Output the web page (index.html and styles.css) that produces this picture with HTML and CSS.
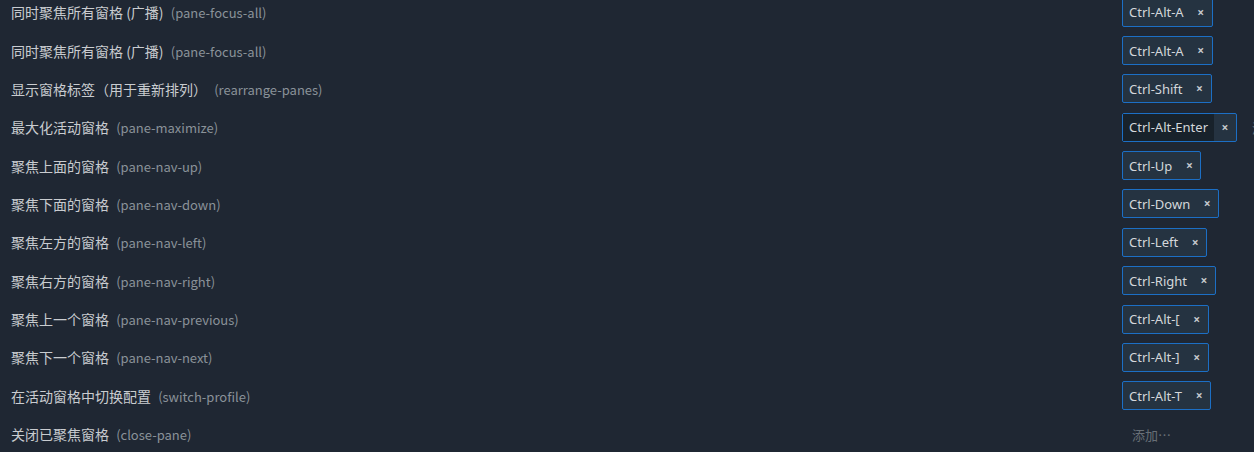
FILE: index.html
```html
<!DOCTYPE html>
<html>
<head>
    <title>快捷键</title>
    <link rel="stylesheet" href="styles.css">
</head>
<body>

<div class="hotkeys">
    <div class="row">
        <div class="name">同时聚焦所有窗格 (广播) <span class="id">(pane-focus-all)</span></div>
        <div class="keys"><span class="tag"><span class="combo">Ctrl-Alt-A</span><span class="remove">×</span></span></div>
    </div>
    <div class="row">
        <div class="name">同时聚焦所有窗格 (广播) <span class="id">(pane-focus-all)</span></div>
        <div class="keys"><span class="tag"><span class="combo">Ctrl-Alt-A</span><span class="remove">×</span></span></div>
    </div>
    <div class="row">
        <div class="name">显示窗格标签（用于重新排列） <span class="id">(rearrange-panes)</span></div>
        <div class="keys"><span class="tag"><span class="combo">Ctrl-Shift</span><span class="remove">×</span></span></div>
    </div>
    <div class="row">
        <div class="name">最大化活动窗格 <span class="id">(pane-maximize)</span></div>
        <div class="keys"><span class="tag hover"><span class="combo">Ctrl-Alt-Enter</span><span class="remove">×</span></span><span class="add">添加…</span></div>
    </div>
    <div class="row">
        <div class="name">聚焦上面的窗格 <span class="id">(pane-nav-up)</span></div>
        <div class="keys"><span class="tag"><span class="combo">Ctrl-Up</span><span class="remove">×</span></span></div>
    </div>
    <div class="row">
        <div class="name">聚焦下面的窗格 <span class="id">(pane-nav-down)</span></div>
        <div class="keys"><span class="tag"><span class="combo">Ctrl-Down</span><span class="remove">×</span></span></div>
    </div>
    <div class="row">
        <div class="name">聚焦左方的窗格 <span class="id">(pane-nav-left)</span></div>
        <div class="keys"><span class="tag"><span class="combo">Ctrl-Left</span><span class="remove">×</span></span></div>
    </div>
    <div class="row">
        <div class="name">聚焦右方的窗格 <span class="id">(pane-nav-right)</span></div>
        <div class="keys"><span class="tag"><span class="combo">Ctrl-Right</span><span class="remove">×</span></span></div>
    </div>
    <div class="row">
        <div class="name">聚焦上一个窗格 <span class="id">(pane-nav-previous)</span></div>
        <div class="keys"><span class="tag"><span class="combo">Ctrl-Alt-[</span><span class="remove">×</span></span></div>
    </div>
    <div class="row">
        <div class="name">聚焦下一个窗格 <span class="id">(pane-nav-next)</span></div>
        <div class="keys"><span class="tag"><span class="combo">Ctrl-Alt-]</span><span class="remove">×</span></span></div>
    </div>
    <div class="row">
        <div class="name">在活动窗格中切换配置 <span class="id">(switch-profile)</span></div>
        <div class="keys"><span class="tag"><span class="combo">Ctrl-Alt-T</span><span class="remove">×</span></span></div>
    </div>
    <div class="row">
        <div class="name">关闭已聚焦窗格 <span class="id">(close-pane)</span></div>
        <div class="keys"><span class="add first">添加…</span></div>
    </div>
</div>

</body>
</html>
```

FILE: styles.css
```css
body {
    margin: 0;
    padding: 0;
    background: #1f2733;
    color: #c9ccd0;
    font-family: "Noto Sans", "Noto Sans CJK SC", sans-serif;
    font-size: 13px;
    overflow: hidden;
}

.hotkeys {
    margin-top: -7px; /* list is scrolled a little */
}

.row {
    display: grid;
    grid-template-columns: 1fr 132px;
    align-items: center;
    height: 38.36px;
}

.name {
    padding-left: 11px;
    white-space: nowrap;
    font-family: "Noto Sans CJK SC", sans-serif;
    font-size: 14px;
}
.id {
    color: #8a9299;
    margin-left: 4px;
    font-size: 13px;
}

.keys {
    display: flex;
    align-items: center;
    white-space: nowrap;
}

.tag {
    display: flex;
    align-items: stretch;
    height: 27px;
    border: 1px solid #1c6fc5;
    border-radius: 2px;
    background: #253341;
    color: #d4d7da;
    flex-shrink: 0;
}
.combo {
    display: flex;
    align-items: center;
    padding: 0 6px 0 6px;
}
.remove {
    display: flex;
    align-items: center;
    justify-content: center;
    width: 22px;
    font-size: 12px;
    font-weight: 700;
    color: #c4c8cc;
}
.tag.hover .combo {
    background: #18222b;
}

.add {
    margin-left: 5px;
    padding-left: 10px;
    color: #686f77;
    flex-shrink: 0;
    font-family: "Noto Sans CJK SC", sans-serif;
}
.add.first {
    margin-left: 0;
}
```
